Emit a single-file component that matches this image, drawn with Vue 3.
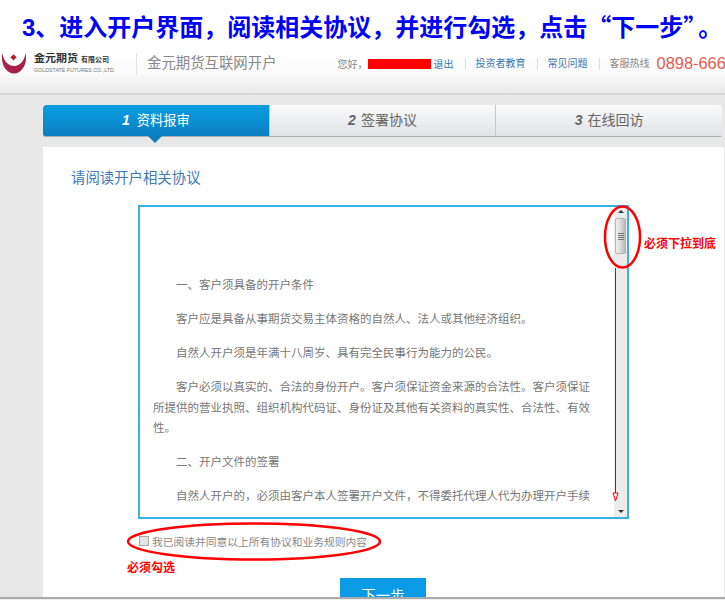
<script setup>
const steps = [
  { num: 1, label: '资料报审', active: true },
  { num: 2, label: '签署协议', active: false },
  { num: 3, label: '在线回访', active: false }
];

const paragraphs = [
  '一、客户须具备的开户条件',
  '客户应是具备从事期货交易主体资格的自然人、法人或其他经济组织。',
  '自然人开户须是年满十八周岁、具有完全民事行为能力的公民。',
  '客户必须以真实的、合法的身份开户。客户须保证资金来源的合法性。客户须保证所提供的营业执照、组织机构代码证、身份证及其他有关资料的真实性、合法性、有效性。',
  '二、开户文件的签署',
  '自然人开户的，必须由客户本人签署开户文件，不得委托代理人代为办理开户手续'
];
</script>

<template>
  <div class="page">
    <h1 class="headline"><span>3</span>、进入开户界面，阅读相关协议，并进行勾选，点击“下一步”<em>。</em></h1>

    <header class="topbar">
      <div class="logo">
        <svg class="logo-mark" width="27" height="21" viewBox="0 0 27 21">
          <path d="M2.5 0 C0 10 6 20.5 14 20.5 C22 20.5 28 10 25.5 0 C25 7 20 13 14 13 C8 13 3 7 2.5 0 Z" fill="#a8204a" />
          <path d="M13.5 1.2 L16.6 4.3 L13.5 7.4 L10.4 4.3 Z" fill="#b5202c" />
        </svg>
        <div class="logo-text">
          <div class="logo-cn">金元期货 <span>有限公司</span></div>
          <div class="logo-en">GOLDSTATE FUTURES CO.,LTD.</div>
        </div>
      </div>
      <div class="site-name">金元期货互联网开户</div>
      <nav class="nav">
        <span class="hello">您好，</span>
        <span class="redact"></span>
        <a class="link logout">退出</a>
        <a class="link sep">投资者教育</a>
        <a class="link sep">常见问题</a>
        <span class="hotline sep">客服热线</span>
        <span class="phone">0898-666</span>
      </nav>
    </header>

    <main class="main">
      <div class="steps">
        <div v-for="s in steps" :key="s.num" class="step" :class="{ active: s.active }">
          <i>{{ s.num }}</i>{{ s.label }}
        </div>
      </div>

      <section class="card">
        <h2 class="card-title">请阅读开户相关协议</h2>

        <div class="agreement">
          <div class="agreement-text">
            <p v-for="(p, i) in paragraphs" :key="i">{{ p }}</p>
          </div>
          <div class="scrollbar">
            <span class="arrow up"></span>
            <div class="thumb"><b></b><b></b><b></b><b></b></div>
            <span class="arrow down"></span>
          </div>

          <!-- annotation: pull down to the end -->
          <svg class="mark-scroll" width="44" height="300" viewBox="0 0 44 300">
            <ellipse cx="22.5" cy="32" rx="17.5" ry="30.5" fill="none" stroke="#f00" stroke-width="2.5" />
            <path d="M15.5 63 V290" stroke="#d40000" stroke-width="1" fill="none" />
            <path d="M13 288 L18 288 L15.5 296 Z" fill="#fff" stroke="#e8000b" stroke-width="1" />
          </svg>
          <span class="note note-scroll">必须下拉到底</span>
        </div>

        <label class="agree">
          <span class="checkbox"></span>
          我已阅读并同意以上所有协议和业务规则内容
          <svg class="mark-agree" width="256" height="40" viewBox="0 0 256 40">
            <ellipse cx="127" cy="19.5" rx="126" ry="18" fill="none" stroke="#f00" stroke-width="2.5" />
          </svg>
        </label>
        <div class="note-agree">必须勾选</div>

        <button class="next">下一步</button>
      </section>
    </main>
    <div class="bottom-line"></div>
  </div>
</template>

<style scoped>
.page {
  position: relative;
  width: 725px;
  height: 600px;
  overflow: hidden;
  background: #fff;
  font-family: "Liberation Sans", "Noto Sans CJK SC", sans-serif;
  color: #777;
}

.headline {
  height: 53px;
  margin: 0;
  padding: 11px 0 0 22px;
  box-sizing: border-box;
  font-family: "Noto Sans CJK SC", sans-serif;
  font-size: 24px;
  line-height: 30px;
  font-weight: 700;
  color: #0000f5;
  white-space: nowrap;
}

.headline span {
  font-family: "Liberation Sans", sans-serif;
}

.headline em {
  margin-left: 3px;
  font-style: normal;
}

.topbar {
  display: flex;
  align-items: flex-start;
  height: 42px;
  box-sizing: border-box;
  background: linear-gradient(#fff, #fbfbfb 50%, #e9e9e9);
  border-bottom: 2px solid #d6d6d6;
  overflow: hidden;
}

.logo {
  flex: none;
  display: flex;
  width: 136px;
  height: 22px;
  border-right: 1px solid #e2e2e2;
}

.logo-mark {
  flex: none;
  margin-right: 7px;
}

.logo-text {
  white-space: nowrap;
}

.logo-cn {
  font-size: 11px;
  line-height: 11px;
  font-weight: 700;
  color: #333;
}

.logo-cn span {
  font-size: 7px;
}

.logo-en {
  margin-top: 1px;
  font-size: 5.3px;
  line-height: 8px;
  color: #777;
}

.site-name {
  flex: none;
  margin-left: 10px;
  font-size: 14.4px;
  line-height: 20px;
  color: #888;
  white-space: nowrap;
}

.nav {
  flex: none;
  display: flex;
  align-items: center;
  height: 21px;
  margin-left: 61px;
  font-size: 10px;
  white-space: nowrap;
}

.hello {
  width: 30px;
  color: #888;
}

.redact {
  width: 63px;
  height: 10px;
  background: #f00;
}

.link {
  color: #3a75ad;
}

.logout {
  margin-left: 3px;
}

.sep {
  margin-left: 11px;
  padding-left: 10px;
  border-left: 1px solid #ddd;
  line-height: 12px;
}

.hotline {
  color: #888;
}

.phone {
  margin-left: 7px;
  font-size: 16.4px;
  color: #e8594f;
}

.main {
  height: 503px;
  box-sizing: border-box;
  padding: 10px 1px 0 43px;
  background: #e8e8e8;
}

.steps {
  display: flex;
  height: 31px;
  margin-right: 2px;
  border-bottom: 1px solid #aab0b6;
  border-radius: 4px 4px 2px 2px;
}

.step {
  position: relative;
  flex: 1;
  box-sizing: border-box;
  text-align: center;
  font-size: 14px;
  line-height: 30px;
  color: #666;
  background: linear-gradient(#fbfbfb, #dfe2e6);
  border-left: 1px solid #c4c8cc;
}

.step:last-child {
  border-radius: 0 4px 0 0;
}

.step i {
  margin-right: 5px;
  font-weight: 700;
}

.step.active {
  color: #fff;
  font-size: 13.2px;
  background: linear-gradient(#0b9ee2, #0a7fc2);
  border-left: 0;
  border-radius: 4px 0 0 2px;
}

.step.active i {
  margin-right: 7px;
  font-size: 14px;
}

.step.active::after {
  content: "";
  position: absolute;
  left: 105px;
  bottom: -7px;
  border: 7px solid transparent;
  border-bottom: 0;
  border-top-color: #0b7cbd;
}

.card {
  height: 451px;
  margin-top: 10px;
  padding: 22px 0 0 28px;
  box-sizing: border-box;
  background: #fff;
}

.card-title {
  margin: 0;
  font-size: 14.4px;
  line-height: 18px;
  font-weight: 400;
  color: #3f7bb6;
}

.agreement {
  position: relative;
  display: flex;
  width: 491px;
  height: 314px;
  margin: 18px 0 0 67px;
  box-sizing: border-box;
  border: 2px solid #3bb0e8;
}

.agreement-text {
  flex: 1;
  height: 100%;
  overflow: hidden;
  padding: 68px 23px 0 13px;
  box-sizing: border-box;
  font-size: 11.5px;
  line-height: 20.5px;
}

.agreement-text p {
  margin: 0 0 13.5px;
  text-indent: 23px;
}

.scrollbar {
  flex: none;
  display: flex;
  flex-direction: column;
  align-items: center;
  width: 13px;
  background: #ececec;
}

.arrow {
  width: 0;
  height: 0;
  border: 3px solid transparent;
}

.arrow.up {
  margin-top: 3px;
  border-top: 0;
  border-bottom: 3px solid #333;
}

.arrow.down {
  margin-top: auto;
  margin-bottom: 4px;
  border-bottom: 0;
  border-top: 3px solid #333;
}

.thumb {
  display: flex;
  flex-direction: column;
  justify-content: center;
  align-items: center;
  gap: 1px;
  width: 11px;
  height: 36px;
  margin-top: 5px;
  box-sizing: border-box;
  border: 1px solid #b4b4b4;
  border-radius: 2px;
  background: linear-gradient(90deg, #f0f0f0, #dcdcdc 50%, #b8b8b8);
}

.thumb b {
  width: 6px;
  height: 1px;
  background: #777;
}

.mark-scroll {
  position: absolute;
  top: -2px;
  left: 460px;
}

.note {
  position: absolute;
  font-weight: 700;
  font-size: 12px;
  color: #f00;
  white-space: nowrap;
}

.note-scroll {
  top: 27px;
  left: 504px;
}

.agree {
  position: relative;
  display: flex;
  align-items: center;
  height: 16px;
  margin: 14px 0 0 68px;
  font-size: 10.75px;
  color: #888;
  white-space: nowrap;
}

.checkbox {
  width: 8px;
  height: 8px;
  margin-right: 3px;
  border: 1px solid #aaa;
  background: #e4e4e4;
}

.mark-agree {
  position: absolute;
  top: -11px;
  left: -12px;
}

.note-agree {
  margin: 11px 0 0 56px;
  font-size: 12px;
  line-height: 16px;
  font-weight: 700;
  color: #f00;
}

.next {
  display: block;
  width: 86px;
  height: 44px;
  margin: 2px 0 0 269px;
  border: 0;
  padding: 0 0 12px;
  background: #0a9be6;
  color: #fff;
  font-family: inherit;
  font-size: 14.5px;
}

.bottom-line {
  position: absolute;
  left: 0;
  right: 0;
  top: 597px;
  height: 3px;
  box-sizing: border-box;
  background: #efefef;
  border-top: 2px solid #aaa;
}
</style>
